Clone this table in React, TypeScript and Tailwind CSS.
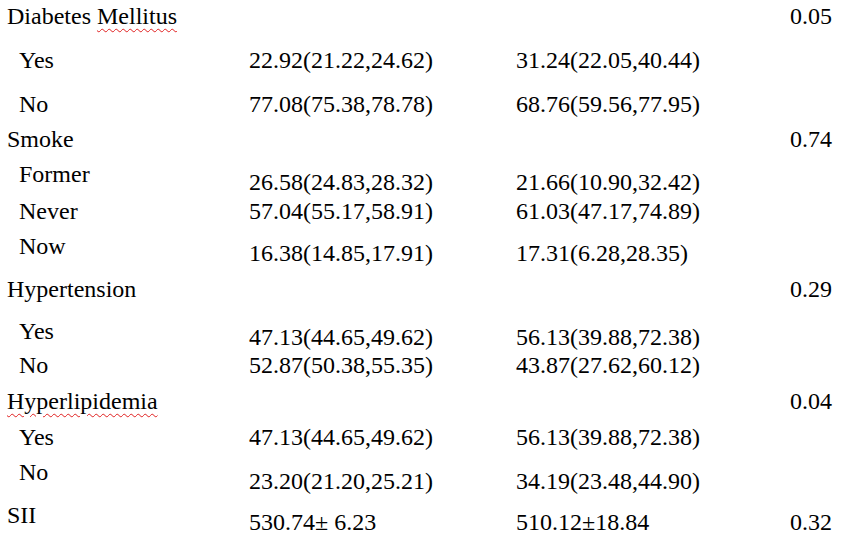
import React from "react";

type Row = {
  label: React.ReactNode;
  sub?: boolean;
  h: string;
  off: string;
  a?: string;
  b?: string;
  p?: string;
};

const wavy =
  "underline decoration-wavy decoration-[#e02020] decoration-1 underline-offset-[4px]";

const rows: Row[] = [
  {
    label: (
      <>
        Diabetes <span className={wavy}>Mellitus</span>
      </>
    ),
    h: "h-[44px]",
    off: "pt-0",
    p: "0.05",
  },
  { label: "Yes", sub: true, h: "h-[44px]", off: "pt-0", a: "22.92(21.22,24.62)", b: "31.24(22.05,40.44)" },
  { label: "No", sub: true, h: "h-[35px]", off: "pt-0", a: "77.08(75.38,78.78)", b: "68.76(59.56,77.95)" },
  { label: "Smoke", h: "h-[35px]", off: "pt-0", p: "0.74" },
  { label: "Former", sub: true, h: "h-[37px]", off: "pt-[8px]", a: "26.58(24.83,28.32)", b: "21.66(10.90,32.42)" },
  { label: "Never", sub: true, h: "h-[35px]", off: "pt-0", a: "57.04(55.17,58.91)", b: "61.03(47.17,74.89)" },
  { label: "Now", sub: true, h: "h-[43px]", off: "pt-[7px]", a: "16.38(14.85,17.91)", b: "17.31(6.28,28.35)" },
  { label: "Hypertension", h: "h-[42px]", off: "pt-0", p: "0.29" },
  { label: "Yes", sub: true, h: "h-[34px]", off: "pt-[6px]", a: "47.13(44.65,49.62)", b: "56.13(39.88,72.38)" },
  { label: "No", sub: true, h: "h-[36px]", off: "pt-0", a: "52.87(50.38,55.35)", b: "43.87(27.62,60.12)" },
  { label: <span className={wavy}>Hyperlipidemia</span>, h: "h-[36px]", off: "pt-0", p: "0.04" },
  { label: "Yes", sub: true, h: "h-[35px]", off: "pt-0", a: "47.13(44.65,49.62)", b: "56.13(39.88,72.38)" },
  { label: "No", sub: true, h: "h-[43px]", off: "pt-[9px]", a: "23.20(21.20,25.21)", b: "34.19(23.48,44.90)" },
  { label: "SII", h: "h-[46px]", off: "pt-[7px]", a: "530.74\u00b1 6.23", b: "510.12\u00b118.84", p: "0.32" },
];

export default function App() {
  return (
    <div className="w-[866px] h-[549px] bg-white text-black overflow-hidden pt-[4px] pl-[7px] text-[24px] leading-[24px] font-['Liberation_Serif','Times_New_Roman',serif]">
      {rows.map((r, i) => (
        <div key={i} className={`flex items-start whitespace-nowrap ${r.h}`}>
          <div className={r.sub ? "w-[242px] pl-[12px]" : "w-[242px]"}>{r.label}</div>
          <div className={`w-[267px] ${r.off}`}>{r.a ?? ""}</div>
          <div className={`w-[274px] ${r.off}`}>{r.b ?? ""}</div>
          <div className={r.off}>{r.p ?? ""}</div>
        </div>
      ))}
    </div>
  );
}
